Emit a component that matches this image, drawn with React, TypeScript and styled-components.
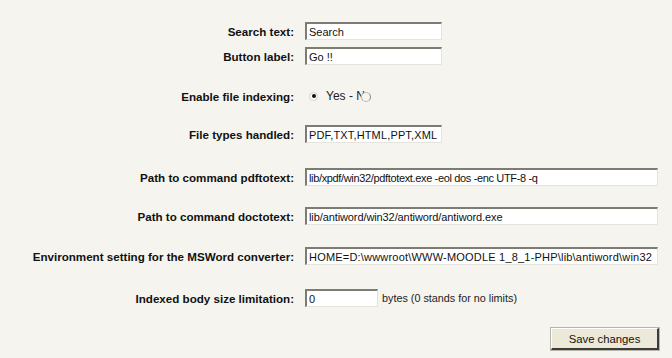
import React from "react";
import styled, { createGlobalStyle } from "styled-components";

const Global = createGlobalStyle`
  html, body { margin: 0; padding: 0; background: #f5f4ef; }
  body { font-family: "Liberation Sans", Arial, sans-serif; }
`;

const Page = styled.div`
  width: 672px;
  height: 358px;
  background: #f5f4ef;
  padding-top: 22px;
  box-sizing: border-box;
  overflow: hidden;
`;

const Form = styled.div`
  display: grid;
  grid-template-columns: 294px 367px;
  column-gap: 11px;
`;

const Label = styled.div<{ $top: number }>`
  margin-top: ${(p) => p.$top}px;
  height: 18px;
  display: flex;
  align-items: center;
  justify-content: flex-end;
  font-weight: bold;
  font-size: 11.6px;
  color: #111;
  white-space: nowrap;
`;

const Field = styled.div<{ $top: number }>`
  margin-top: ${(p) => p.$top}px;
  height: 18px;
  display: flex;
  align-items: center;
  gap: 4px;
  min-width: 0;
`;

const TextInput = styled.input<{ $w: number; $ls?: number }>`
  flex: none;
  width: ${(p) => p.$w}px;
  max-width: ${(p) => p.$w}px;
  height: 18px;
  box-sizing: border-box;
  padding: 0 2px;
  margin: 0;
  background: #fff;
  border-top: 2px solid #7c7c74;
  border-left: 2px solid #7c7c74;
  border-right: 1px solid #e4e3dc;
  border-bottom: 1px solid #e4e3dc;
  font-family: "Liberation Sans", Arial, sans-serif;
  font-size: 11px;
  color: #111;
  outline: none;
  letter-spacing: ${(p) => p.$ls ?? 0}px;
`;

const Hint = styled.span`
  font-size: 10.8px;
  color: #222;
`;

const RadioGroup = styled.div`
  display: flex;
  align-items: center;
  padding-left: 4px;
  font-size: 12px;
  color: #222;
`;

const Radio = styled.span<{ $checked?: boolean }>`
  width: 9px;
  height: 9px;
  border-radius: 50%;
  box-sizing: border-box;
  border: 1px solid #d0d0c8;
  background: #fff;
  display: inline-flex;
  align-items: center;
  justify-content: center;
  margin-right: 8px;
  &::after {
    content: "";
    width: 4px;
    height: 4px;
    border-radius: 50%;
    background: ${(p) => (p.$checked ? "#111" : "transparent")};
  }
`;

const OverlapRadio = styled.span`
  width: 10px;
  height: 10px;
  border-radius: 50%;
  box-sizing: border-box;
  border: 1px solid #bbb;
  border-right-color: #888;
  background: #f5f4ef;
  margin-left: -4px;
  margin-top: 1px;
`;

const ButtonRow = styled.div`
  grid-column: 1 / span 2;
  margin-top: 21px;
  display: flex;
  justify-content: flex-end;
  padding-right: 13px;
`;

const SaveButton = styled.button`
  width: 108px;
  height: 22px;
  box-sizing: border-box;
  background: #ece9d8;
  border-top: 1px solid #fff;
  border-left: 1px solid #fff;
  border-right: 2px solid #3c3c3c;
  border-bottom: 2px solid #3c3c3c;
  outline: 1px solid #b8b6a8;
  font-family: "Liberation Sans", Arial, sans-serif;
  font-size: 11.3px;
  color: #111;
  padding: 0;
`;

const ENV = String.raw`HOME=D:\wwwroot\WWW-MOODLE 1_8_1-PHP\lib\antiword\win32`;

export default function App() {
  return (
    <Page>
      <Global />
      <Form>
        <Label $top={0}>Search text:</Label>
        <Field $top={0}>
          <TextInput $w={137} defaultValue="Search" />
        </Field>

        <Label $top={7}>Button label:</Label>
        <Field $top={7}>
          <TextInput $w={137} defaultValue="Go !!" />
        </Field>

        <Label $top={22}>Enable file indexing:</Label>
        <Field $top={22}>
          <RadioGroup>
            <Radio $checked />
            <span>Yes - N</span>
            <OverlapRadio />
          </RadioGroup>
        </Field>

        <Label $top={20}>File types handled:</Label>
        <Field $top={20}>
          <TextInput $w={137} $ls={0.15} defaultValue="PDF,TXT,HTML,PPT,XML" />
        </Field>

        <Label $top={25}>Path to command pdftotext:</Label>
        <Field $top={25}>
          <TextInput $w={353} $ls={-0.35} defaultValue="lib/xpdf/win32/pdftotext.exe -eol dos -enc UTF-8 -q" />
        </Field>

        <Label $top={21}>Path to command doctotext:</Label>
        <Field $top={21}>
          <TextInput $w={353} $ls={-0.1} defaultValue="lib/antiword/win32/antiword/antiword.exe" />
        </Field>

        <Label $top={22}>Environment setting for the MSWord converter:</Label>
        <Field $top={22}>
          <TextInput $w={353} $ls={0.2} defaultValue={ENV} />
        </Field>

        <Label $top={24}>Indexed body size limitation:</Label>
        <Field $top={24}>
          <TextInput $w={73} defaultValue="0" />
          <Hint>bytes (0 stands for no limits)</Hint>
        </Field>

        <ButtonRow>
          <SaveButton>Save changes</SaveButton>
        </ButtonRow>
      </Form>
    </Page>
  );
}
